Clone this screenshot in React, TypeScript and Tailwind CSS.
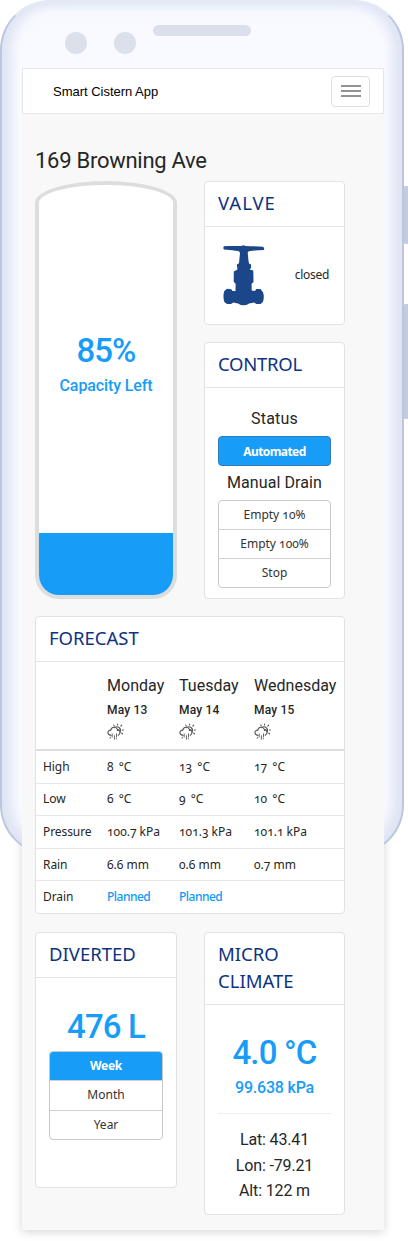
import type { ReactNode } from "react";

function Card({ title, className, children }: { title: ReactNode; className: string; children: ReactNode }) {
  return (
    <section className={`flex flex-col rounded-[4px] border border-[#e2e2e2] bg-white ${className}`}>
      <h2 className="border-b border-[#e4e4e4] pt-[7px] pb-[10px] pl-[13px] font-['Noto_Sans'] text-[18.5px] leading-[27px] text-[#0d3380]">
        {title}
      </h2>
      {children}
    </section>
  );
}

function WeatherIcon() {
  return (
    <svg width="18" height="18" viewBox="0 0 18 18" fill="none" stroke="#555" strokeWidth="1.1" strokeLinecap="round" className="mt-[2px]">
      <path d="M4 12.4C-.3 11.8.1 7 3.8 7.1C4.3 3.7 9.2 3.1 10.4 6.4C13.6 6.7 14 10.9 11.2 12.2" />
      <path d="M7.7 4.6C10.8 2.2 14.8 5.7 13 9.1M10.2 7.5L12 7.2" />
      <path d="M10.6 2V1M7.3 2.9L6.8 2M13.8 3.1l.9-1M15.4 7h1M14.8 10.2l.8.6" />
      <path d="M5.2 11v3M7.4 12.7v3.5M9.5 10.8v3M3.5 14.2l-.3 1M9.3 15.2v.6" strokeWidth=".9" />
    </svg>
  );
}

function Valve() {
  return (
    <svg width="42" height="61" viewBox="0 0 42 61" fill="#1b478a">
      <path d="M1 1.3C6 .5 14 1.2 18.5 1Q20.5-.6 22.5 1C28 1.4 34 .9 40 1.8Q42 3.3 40.7 5Q32 5.3 25.7 6.2L24.7 7.5L25.5 15.7L26 18.5L28 19.5L28.2 22.5L26.7 24.6L30.3 25.5L30.5 37L28.6 38.8L28.7 45.6L32 46L33.3 44.1L37.5 44L40 47.3Q41.6 52 40 56.8L37.6 59L33.2 59L31.2 57.5L26.2 58.5Q20.5 62.2 15 58.5L10.4 57.5L8 59L4 59L1.3 57Q-.4 51.5 1.3 46.1L4 43.8L8.3 44.2L9.5 46L12.5 46L12.6 38.7L10.7 36.8L10.8 26.5L14.5 24.4L13.8 19.5L16 18.2L17 8L16 6.2Q10 5.1 1 4.5Q-.3 3 1 1.3Z" />
    </svg>
  );
}

function ButtonGroup({ items, active = false, className }: { items: string[]; active?: boolean; className: string }) {
  return (
    <div className={`flex flex-col divide-y divide-[#d0d0d0] overflow-hidden rounded-[4px] border border-[#c9c9c9] font-['Noto_Sans'] text-[12px] text-[#333] ${className}`}>
      {items.map((item, i) => (
        <button
          key={item}
          className={
            active && i === 0
              ? "min-h-0 flex-1 bg-[#179cf8] text-center leading-[26px] font-bold tracking-[-0.3px] text-white"
              : "min-h-0 flex-1 text-center leading-[26px] oldstyle-nums"
          }
        >
          {item}
        </button>
      ))}
    </div>
  );
}

const days = [
  { name: "Monday", date: "May 13" },
  { name: "Tuesday", date: "May 14" },
  { name: "Wednesday", date: "May 15" },
];

const rows = [
  ["High", "8 °C", "13 °C", "17 °C"],
  ["Low", "6 °C", "9 °C", "10 °C"],
  ["Pressure", "100.7 kPa", "101.3 kPa", "101.1 kPa"],
  ["Rain", "6.6 mm", "0.6 mm", "0.7 mm"],
  ["Drain", "Planned", "Planned", ""],
];

function PhoneFrame() {
  return (
    <div className="absolute inset-0">
      <div className="absolute top-[186px] left-[403px] h-[58px] w-[8px] rounded-[3px] bg-[#c2cbdf]" />
      <div className="absolute top-[304px] left-[403px] h-[115px] w-[8px] rounded-[3px] bg-[#c2cbdf]" />
      <div className="absolute top-0 left-0 h-[855px] w-[404px] rounded-[50px] border-2 border-t-[#e2e8f5] border-r-[#bcc7df] border-b-[#bcc7df] border-l-[#bcc7df] bg-[#f9faff] shadow-[inset_8px_0_12px_#dfe4f3,inset_-8px_0_12px_#dfe4f3,inset_0_-8px_18px_#dfe4f3,inset_0_12px_22px_#f4f7ff]" />
      <div className="absolute top-[32px] left-[65px] size-[22px] rounded-full bg-[#dce0ea]" />
      <div className="absolute top-[32px] left-[114px] size-[22px] rounded-full bg-[#dce0ea]" />
      <div className="absolute top-[25px] left-[153px] h-[11px] w-[98px] rounded-full bg-[#dbdeeb]" />
    </div>
  );
}

export default function App() {
  return (
    <div className="relative h-[1241px] w-[408px] overflow-hidden bg-white pt-[68px] pl-[22px] font-[Roboto,sans-serif] text-[#262626]">
      <div className="absolute top-[780px] left-[22px] h-[450px] w-[362px] shadow-[0_2px_9px_rgba(0,0,0,0.17)]" />
      <PhoneFrame />
      <div className="relative h-[1162px] w-[362px] bg-[#f8f8f8]">
        <header className="flex h-[46px] items-center justify-between border border-[#e7e7e7] bg-white pr-[13px] pl-[30px]">
          <span className="pt-[2px] font-['Liberation_Sans'] text-[13px] tracking-[-0.02px] text-black">Smart Cistern App</span>
          <button className="flex h-[31px] w-[39px] flex-col items-center justify-center gap-[3px] rounded-[4px] border border-[#dfdfdf]">
            <span className="h-[2px] w-[20px] bg-[#939393]" />
            <span className="h-[2px] w-[20px] bg-[#939393]" />
            <span className="h-[2px] w-[20px] bg-[#939393]" />
          </button>
        </header>
        <main className="flex w-[323px] flex-col pl-[13px]">
          <h1 className="mt-[33px] h-[34px] text-[22px] leading-[28px] tracking-[-0.27px] whitespace-nowrap">169 Browning Ave</h1>
          <div className="flex h-[418px] justify-between">
            <div className="flex w-[142px] flex-col overflow-hidden rounded-[71px_71px_24px_24px/22px_22px_24px_24px] border-[4px] border-[#dcdddd] bg-white text-center text-[#179cf8]">
              <p className="mt-[144px] text-[33px] leading-[44px] font-medium tracking-[-1px]">85%</p>
              <p className="mt-[1px] text-[16px] leading-[24px] font-medium tracking-[-0.12px]">Capacity Left</p>
              <div className="mt-auto h-[62px] bg-[#179cf8]" />
            </div>
            <div className="flex w-[141px] flex-col justify-between">
              <Card title={<span className="tracking-[1px]">VALVE</span>} className="h-[144px]">
                <div className="flex items-start justify-between pt-[18px] pr-[15px] pl-[18px]">
                  <Valve />
                  <span className="mt-[21px] font-['Noto_Sans'] text-[12px] leading-[18px] tracking-[-0.3px]">closed</span>
                </div>
              </Card>
              <Card title={<span className="tracking-[-0.25px]">CONTROL</span>} className="h-[257px]">
                <div className="flex flex-col px-[13px] text-center">
                  <p className="mt-[18px] text-[16px] leading-[26px] tracking-[0.2px]">Status</p>
                  <button className="mt-[4px] h-[30px] rounded-[4px] border border-[#2d7cc0] bg-[#179cf8] font-['Noto_Sans'] text-[12px] leading-[27px] font-bold tracking-[-0.6px] text-white">Automated</button>
                  <p className="mt-[4px] text-[16px] leading-[26px] tracking-[0.1px]">Manual Drain</p>
                  <ButtonGroup items={["Empty 10%", "Empty 100%", "Stop"]} className="mt-[4px] h-[88px]" />
                </div>
              </Card>
            </div>
          </div>
          <Card title="FORECAST" className="mt-[17px] h-[298px] w-[310px]">
            <div className="grid h-[89px] grid-cols-[71px_72px_75px_91px] border-b-2 border-[#dedede] pt-[11px]">
              <span />
              {days.map((day) => (
                <div key={day.name} className="whitespace-nowrap">
                  <p className="text-[16px] leading-[26px] tracking-[0.02px]">{day.name}</p>
                  <p className="text-[12px] leading-[22px] font-medium tracking-[0.2px]">{day.date}</p>
                  <WeatherIcon />
                </div>
              ))}
            </div>
            {rows.map((row, i) => (
              <div
                key={row[0]}
                className={`grid min-h-0 flex-1 grid-cols-[64px_72px_75px_90px] items-center pl-[7px] font-['Noto_Sans'] text-[12px] leading-[18px] whitespace-nowrap oldstyle-nums ${i < 4 ? "border-b border-[#e8e8e8]" : ""}`}
              >
                <span className="tracking-[-0.08px]">{row[0]}</span>
                {row.slice(1).map((value, j) => (
                  <span key={j} className={i === 4 ? "font-medium tracking-[-0.5px] text-[#0f99f8]" : i < 2 ? "[word-spacing:2px]" : ""}>{value}</span>
                ))}
              </div>
            ))}
          </Card>
          <div className="mt-[18px] flex items-start justify-between text-center">
            <Card title={<span className="block text-left">DIVERTED</span>} className="h-[256px] w-[142px]">
              <p className="mt-[27px] text-[33px] leading-[44px] font-medium tracking-[-0.9px] text-[#179cf8]">476 L</p>
              <ButtonGroup active items={["Week", "Month", "Year"]} className="mx-[13px] mt-[2px] h-[89px]" />
            </Card>
            <Card title={<span className="block text-left">MICRO<br />CLIMATE</span>} className="h-[283px] w-[141px]">
              <div className="mx-[13px] border-b border-[#eee] font-medium text-[#179cf8]">
                <p className="mt-[26px] text-[33px] leading-[44px] tracking-[-0.8px] whitespace-nowrap">4.0 °C</p>
                <p className="mt-[1px] mb-[13px] text-[16px] leading-[24px] tracking-[-0.2px]">99.638 kPa</p>
              </div>
              <p className="mt-[13px] text-[16px] leading-[25.5px] tracking-[-0.15px]">Lat: 43.41<br />Lon: -79.21<br />Alt: 122 m</p>
            </Card>
          </div>
        </main>
      </div>
    </div>
  );
}
